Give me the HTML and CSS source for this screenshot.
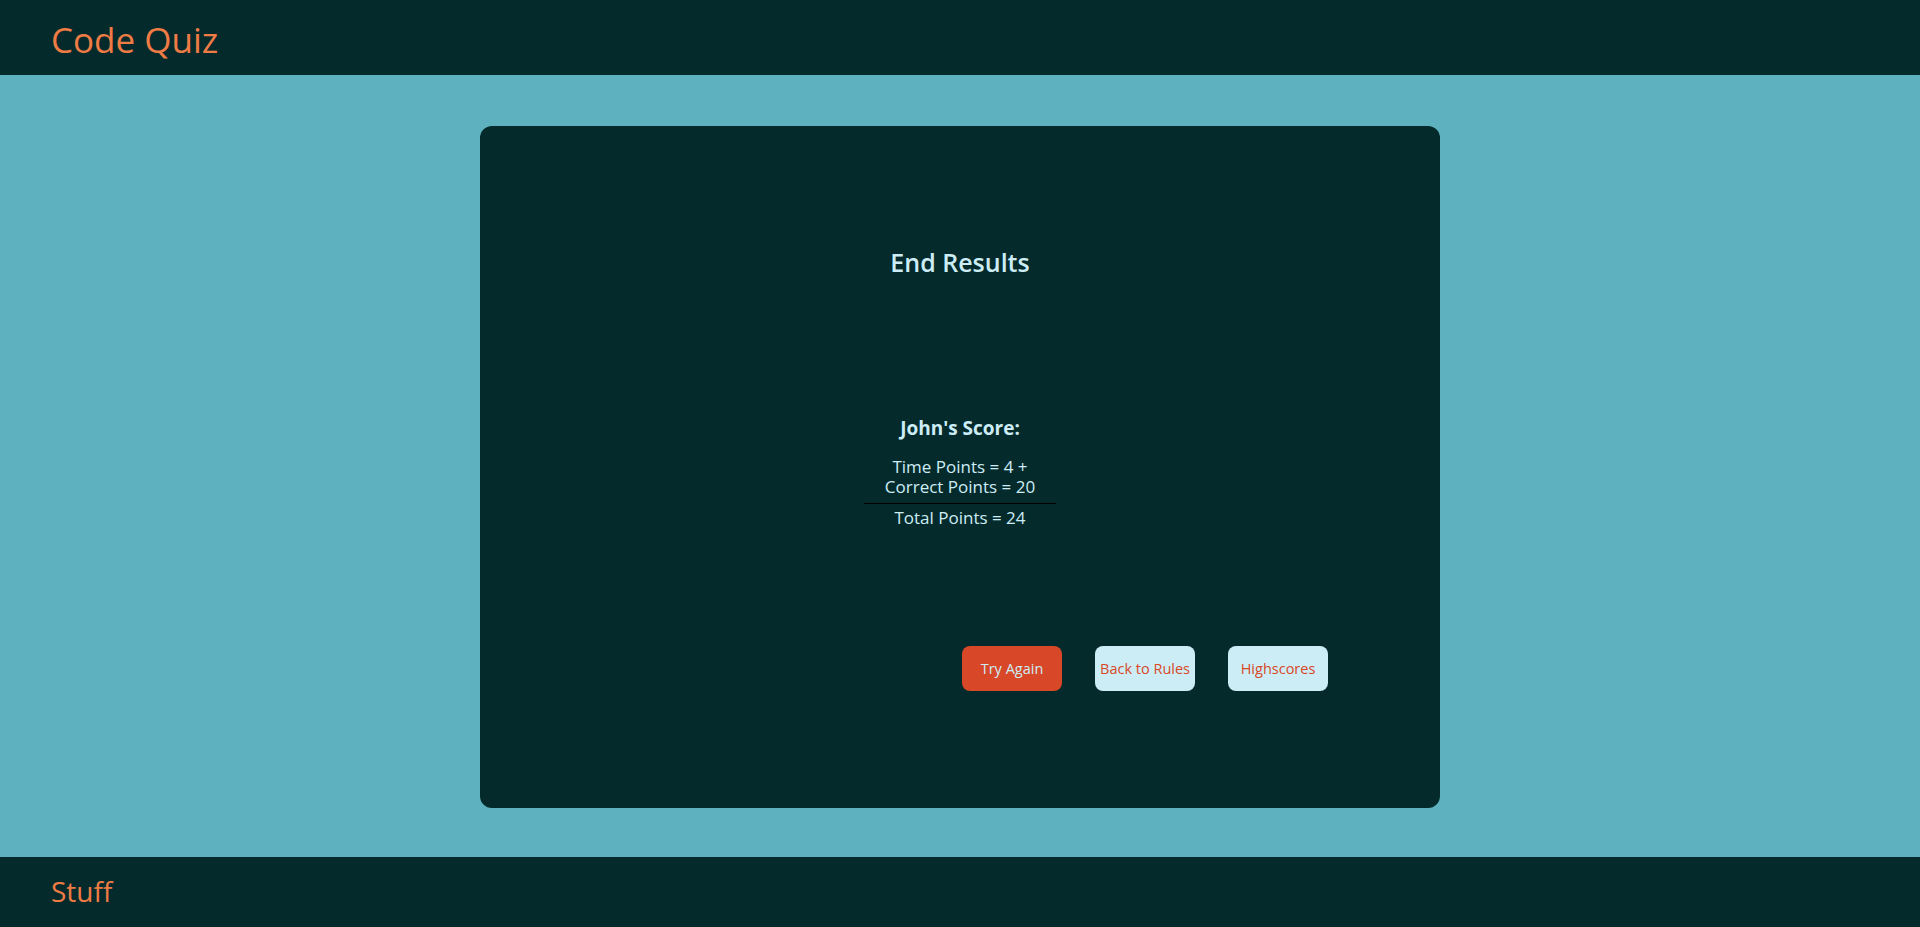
FILE: index.html
```html
<!DOCTYPE html>
<html lang="en">
<head>
<meta charset="utf-8">
<title>Code Quiz</title>
<link rel="stylesheet" href="styles.css">
</head>
<body>
<header class="site-header">
  <h1 class="brand">Code Quiz</h1>
</header>
<main class="main">
  <section class="card">
    <h2 class="card-title">End Results</h2>
    <div class="score">
      <h3 class="score-name">John's Score:</h3>
      <p class="score-line">Time Points = 4 +</p>
      <p class="score-line">Correct Points = 20</p>
      <hr class="score-rule">
      <p class="score-line">Total Points = 24</p>
    </div>
    <div class="actions">
      <button class="btn btn-primary">Try Again</button>
      <button class="btn btn-light">Back to Rules</button>
      <button class="btn btn-light">Highscores</button>
    </div>
  </section>
</main>
<footer class="site-footer">
  <p class="footer-text">Stuff</p>
</footer>
</body>
</html>
```
FILE: styles.css
```css
* { box-sizing: border-box; }
html, body { margin: 0; padding: 0; }
body {
  font-family: "Open Sans", "Liberation Sans", sans-serif;
  background: #5eb1bf;
  color: #cdedf6;
  height: 927px;
  display: flex;
  flex-direction: column;
}
.site-header {
  height: 75px;
  background: #042a2b;
  padding: 0 51px;
  display: flex;
  align-items: center;
}
.brand {
  margin: 4px 0 0 0;
  font-size: 35px;
  font-weight: 400;
  color: #ef7b45;
  line-height: 1;
}
.main {
  flex: 1;
  display: flex;
  justify-content: center;
  padding: 51px 0 49px;
}
.card {
  width: 960px;
  height: 682px;
  background: #042a2b;
  border-radius: 12px;
  display: flex;
  flex-direction: column;
  align-items: center;
}
.card-title {
  margin: 121px 0 0 0;
  font-size: 25px;
  font-weight: 600;
  line-height: 30px;
}
.score {
  margin-top: 139px;
  width: 192px;
  display: flex;
  flex-direction: column;
  align-items: center;
}
.score-name {
  margin: 0 0 17px 0;
  font-size: 19px;
  font-weight: 700;
  line-height: 24px;
}
.score-line {
  margin: 0;
  font-size: 17px;
  line-height: 20px;
  white-space: nowrap;
}
.score-rule {
  width: 100%;
  margin: 6px 0 4px;
  border: 0;
  border-top: 1px solid #000;
}
.actions {
  margin-top: 118px;
  align-self: stretch;
  display: flex;
  justify-content: flex-end;
  gap: 33px;
  padding-right: 112px;
}
.btn {
  width: 100px;
  height: 45px;
  border: 0;
  border-radius: 8px;
  font-family: inherit;
  font-size: 14.5px;
  padding: 0;
  white-space: nowrap;
}
.btn-primary {
  background: #d84727;
  color: #cdedf6;
}
.btn-light {
  background: #cdedf6;
  color: #d84727;
}
.site-footer {
  height: 70px;
  background: #042a2b;
  padding: 0 51px;
  display: flex;
  align-items: center;
}
.footer-text {
  margin: 0 0 2px 0;
  font-size: 28px;
  color: #ef7b45;
  line-height: 1;
}
```
